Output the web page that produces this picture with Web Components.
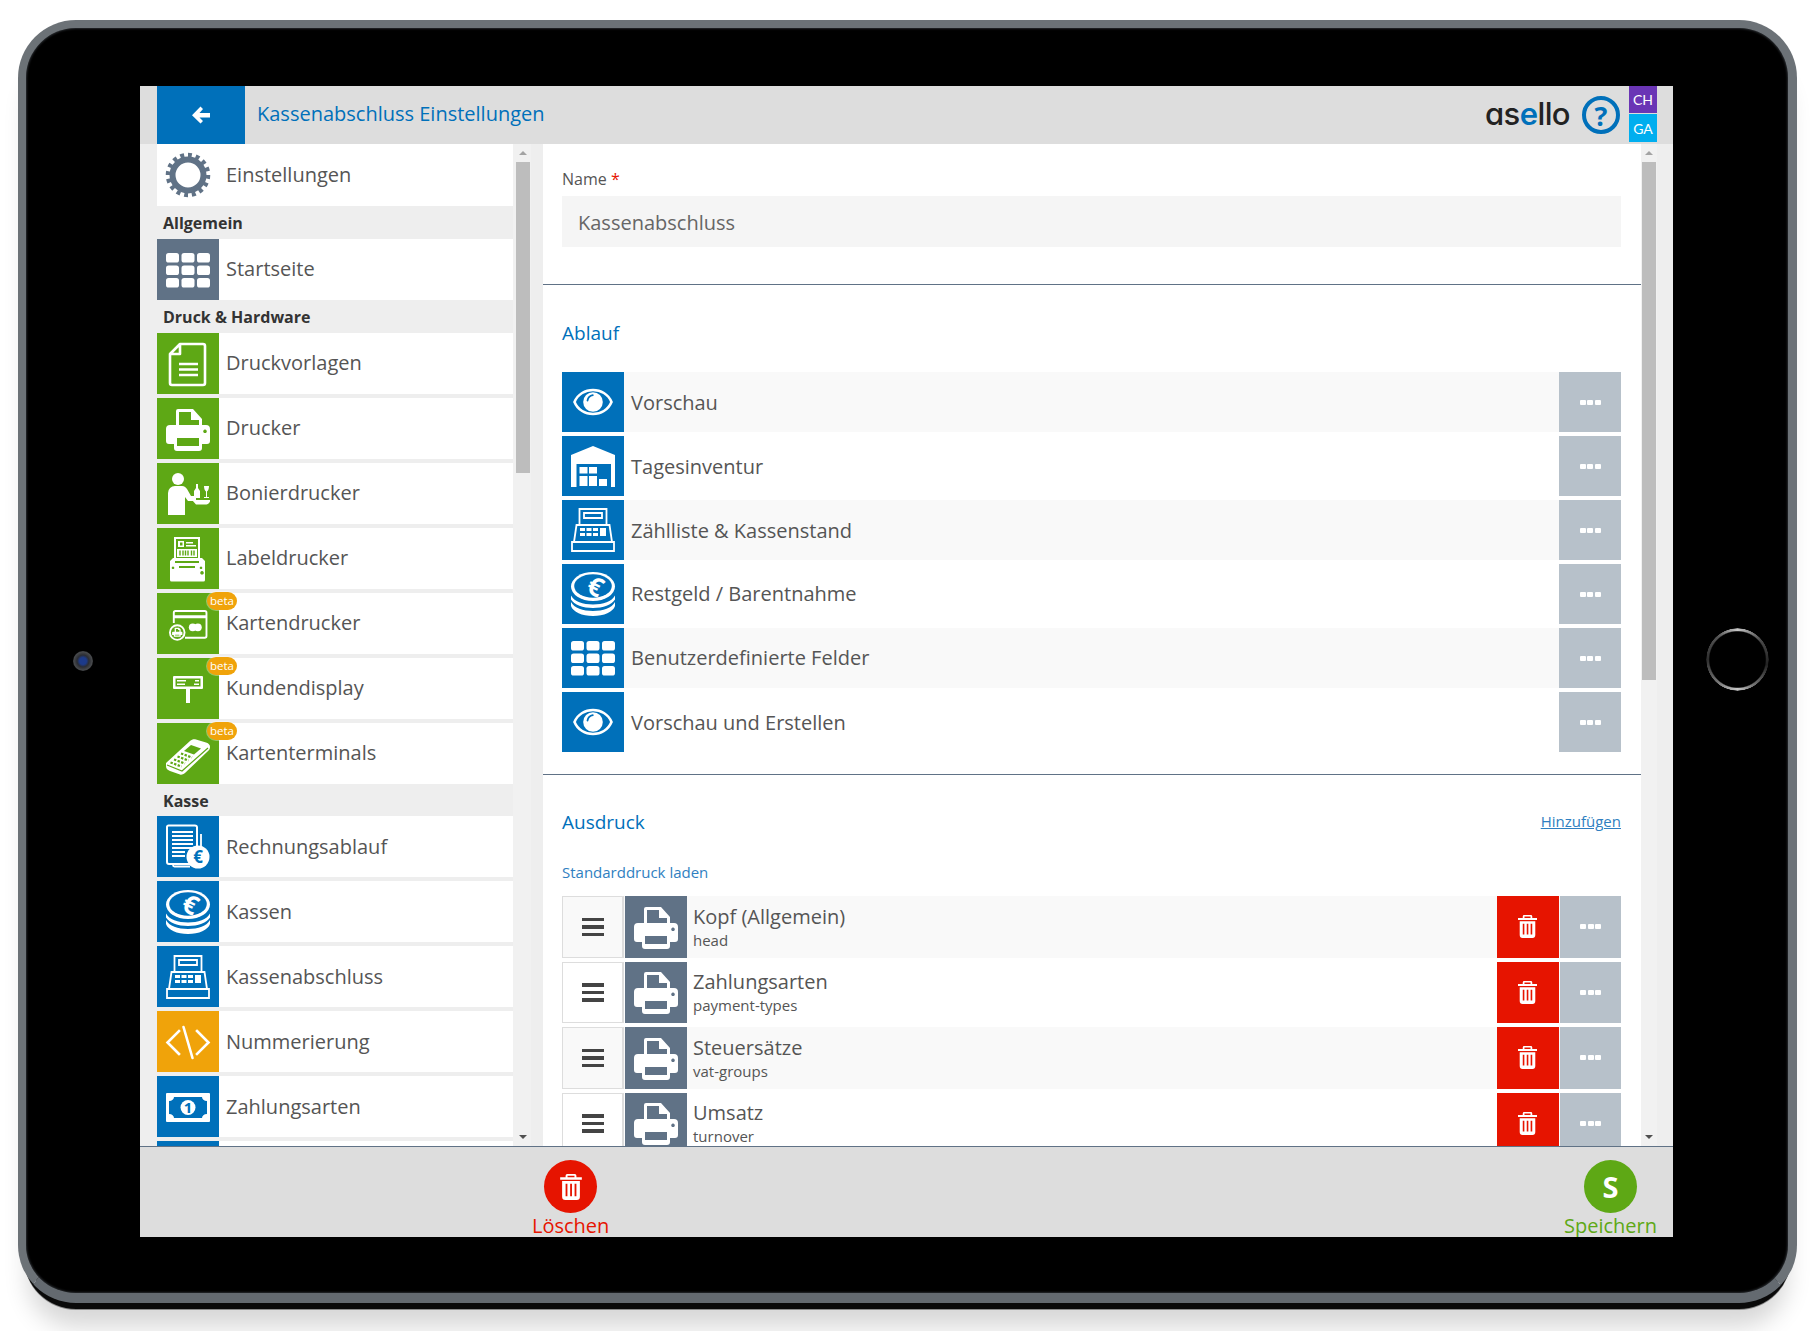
<!DOCTYPE html>
<html lang="de">
<head>
<meta charset="utf-8">
<title>Kassenabschluss Einstellungen</title>
<style>
  html, body { margin: 0; background: #fff; font-family: "Open Sans", "Liberation Sans", sans-serif; }
  body { height: 1331px; overflow: hidden; padding: 20px 18px 0; box-sizing: border-box; }
</style>
</head>
<body>
<script>
const printerPath = `<path fill="currentColor" fill-rule="evenodd" d="M10 4a2 2 0 0 1 2-2h15l9 10v6h4a4 4 0 0 1 4 4v12a3 3 0 0 1-3 3h-5v4a3 3 0 0 1-3 3H11a3 3 0 0 1-3-3v-4H3a3 3 0 0 1-3-3V22a4 4 0 0 1 4-4h6zM13 5v13h20v-5h-8V5zM11 31v8h22v-8zM39 22.500a1.800 1.800 0 1 0 .01 0z"/>`;
const eyePath = `<path fill="none" stroke="currentColor" stroke-width="2.600" d="M3.500 22C10 6 34 6 40.500 22 34 38 10 38 3.500 22z"/><circle cx="22" cy="22" r="9.800" fill="currentColor"/><path fill="none" stroke="var(--tile)" stroke-width="1.800" stroke-linecap="round" d="M16.500 20.500c.6-3 2.600-4.800 5.300-5.300"/>`;
const gridPath = [5, 17.500, 30].map(y => [0, 15.500, 31].map(x =>
  `<rect x="${x}" y="${y}" width="13" height="9.500" rx="2.600" fill="currentColor"/>`).join("")).join("");
const euro = (x, y, size, color, rot) => `<text x="${x}" y="${y}" font-family="Open Sans" font-weight="700" font-size="${size}" text-anchor="middle" fill="${color}" transform="rotate(${rot} ${x} ${y})">€</text>`;

const ICONS = {
  grid: gridPath,
  gear: `<circle cx="22" cy="22" r="15.500" fill="none" stroke="currentColor" stroke-width="6"/><circle cx="22" cy="22" r="20" fill="none" stroke="currentColor" stroke-width="4.500" pathLength="32" stroke-dasharray="1 1"/>`,
  doc: `<path fill="none" stroke="currentColor" stroke-width="2.600" stroke-linejoin="round" d="M14 2h23a2 2 0 0 1 2 2v37a2 2 0 0 1-2 2H6a2 2 0 0 1-2-2V12zM14 2v10H4"/><path stroke="currentColor" stroke-width="2.600" d="M13 22h19M13 27.500h19M13 33h19"/>`,
  printer: printerPath,
  waiter: `<circle cx="12" cy="7" r="6" fill="currentColor"/><path fill="currentColor" d="M2 43V21a7 7 0 0 1 7-7h7c2.500 0 4 1.500 5 3l4 7h5v5h-8l-3-4v18z"/><path fill="currentColor" d="M30 12h2v4l2 3v7h-6v-7l2-3zM38 14h5c0 3-1 5-2 5.500V25h2v1h-5v-1h2v-5.500c-1-.5-2-2.500-2-5.500zM26 28h18v1.500c-1 2.500-3 3-5 3H30z"/>`,
  label: `<path fill="currentColor" fill-rule="evenodd" d="M8 0h26v21h2l3 3v19a1.500 1.500 0 0 1-1.500 1.500h-32A1.500 1.500 0 0 1 4 43V24l3-3h1zM10 2v19h22V2zM9 24v2h24v-2zM7 29.500a1.300 1.300 0 1 0 .01 0zM35 29.500a1.300 1.300 0 1 0 .01 0zM36 34a1.800 1.800 0 1 0 .01 0zM13 29v2h16v-2z"/><path fill="currentColor" d="M12 4h6v6h-6zM20 5h7v1.500h-7zM20 8h10v1.500H20zM11 12h20v8H11z"/><path stroke="var(--tile)" stroke-width="1.400" d="M14 13.500v5M17 13.500v5M19.500 13.500v5M22 13.500v5M25.500 13.500v5M28 13.500v5"/><path fill="var(--tile)" d="M14 5.500h2.500v3H14z"/>`,
  card: `<g transform="translate(3.500 3) scale(.86)"><path fill="none" stroke="currentColor" stroke-width="2.200" d="M5 21V9a2 2 0 0 1 2-2h34a2 2 0 0 1 2 2v27a2 2 0 0 1-2 2H18"/><path fill="currentColor" d="M5 12h38v3.500H5z"/><circle cx="27" cy="26" r="4.500" fill="currentColor"/><circle cx="33" cy="26" r="4.500" fill="currentColor"/><circle cx="9" cy="32" r="8.500" fill="var(--tile)" stroke="currentColor" stroke-width="2.200"/><path fill="currentColor" fill-rule="evenodd" d="M6 26.500h5l2 2V31h1a1 1 0 0 1 1 1v3h-2v2H5v-2H3v-3a1 1 0 0 1 1-1h2zM7.500 28v3h4v-2H10v-1zM6.500 34.500v1h5v-1z"/></g>`,
  display: `<g transform="translate(6 -1)"><path fill="currentColor" fill-rule="evenodd" d="M1 11a1 1 0 0 1 1-1h28a1 1 0 0 1 1 1v11a1 1 0 0 1-1 1H18v14h-4V23H2a1 1 0 0 1-1-1zM3.500 12.500v8h25v-8z"/><path fill="currentColor" d="M5 14h9v1.600H5zM23 14h4v1.600h-4zM5 17.500h8v1.600H5zM22 17.500h5v1.600h-5z"/></g>`,
  terminal: `<path fill="currentColor" d="M0 31 24 9c2-1.800 4-2 6-1.500l10 3c3 1 4 2.500 4 4.500 0 2-1 3.500-3 5L19 41c-2 1.500-3.500 2-5 1.500L4 39c-3-1-4-3-4-5z"/><path fill="var(--tile)" d="m25 13 10 3.500-7 6-10-3.500z"/><path stroke="var(--tile)" stroke-width="2.200" stroke-dasharray="2.400 1.400" d="M15 21.500l11 4M11.500 24.500l11 4M8 27.500l11 4M4.500 30.500l11 4"/><path stroke="var(--tile)" stroke-width="1.200" fill="none" d="M1 33l15 6 26-23"/>`,
  receipt: `<path fill="none" stroke="currentColor" stroke-width="1.800" d="M7 38.500V40a1.500 1.500 0 0 0 1.500 1.500H24M35 9V24"/><path fill="none" stroke="currentColor" stroke-width="2" d="M26 39H3a2 2 0 0 1-2-2V2a1.500 1.500 0 0 1 1.500-1.500h26A2 2 0 0 1 31 2.500V22"/><path stroke="currentColor" stroke-width="1.800" d="M6 7h21M6 11h21M6 15h21M6 19h21M6 23h21M6 27h13M6 31h13"/><circle cx="32" cy="32" r="11.500" fill="currentColor"/>${euro(32, 38, 17, "var(--tile)", 0)}`,
  coins: `<path fill="currentColor" d="M0 30c3 6 12 9 22 9s19-3 22-9v4c-2 6-11 10-22 10S2 40 0 34z"/><path fill="currentColor" d="M0 23.500c3 6 12 9 22 9s19-3 22-9v4c-3 5-12 8.500-22 8.500S3 32.500 0 27.500z"/><ellipse cx="22" cy="14.500" rx="22" ry="14.500" fill="currentColor"/><ellipse cx="22" cy="14" rx="18.800" ry="11.800" fill="var(--tile)"/>${euro(20.500, 23, 26, "currentColor", 25)}`,
  register: `<path fill="none" stroke="currentColor" stroke-width="1.800" d="M8.500 1h27v16H8.500zM13 5h18v5H13zM1 34h42v9H1zM3 34l2.500-17h33L41 34"/><path fill="currentColor" d="M9 20h5v3H9zM15.500 20h5v3h-5zM22 20h5v3h-5zM9 25h5v3H9zM15.500 25h5v3h-5zM22 25h5v3h-5zM29 20h6v8h-6z"/>`,
  code: `<path fill="none" stroke="currentColor" stroke-width="2.600" stroke-linecap="square" d="M13 11 1.500 22.500 13 34M31 11l11.500 11.500L31 34"/><path fill="none" stroke="currentColor" stroke-width="2.600" stroke-linecap="round" d="M17.500 7l9 31"/>`,
  bill: `<path fill="currentColor" fill-rule="evenodd" d="M1 8h42a1 1 0 0 1 1 1v27a1 1 0 0 1-1 1H1a1 1 0 0 1-1-1V9a1 1 0 0 1 1-1zM8 12c0 2-2 4-5 4v13c3 0 5 2 5 4h28c0-2 2-4 5-4V16c-3 0-5-2-5-4z"/><circle cx="22" cy="22.500" r="7.500" fill="currentColor"/><text x="22" y="28" font-family="Open Sans" font-weight="700" font-size="15" text-anchor="middle" fill="var(--tile)">1</text>`,
  eye: eyePath,
  store: `<path fill="currentColor" fill-rule="evenodd" d="M0 11 22 2l22 9v32h-4V20H5.500v23H0z"/><path fill="currentColor" d="M8.500 23h8v6.500h-8zM18 23h8v6.500h-8zM8.500 32h8v10h-8zM18 32h8v10h-8zM28 35h8v7h-8z"/>`
};

const trashSvg = (w, h) => `<svg width="${w}" height="${h}" viewBox="0 0 20 24"><path fill="currentColor" fill-rule="evenodd" d="M6.500 0h7a1.500 1.500 0 0 1 1.500 1.500V3h5v2.200H0V3h5V1.500A1.500 1.500 0 0 1 6.500 0zM6.800 1.500V3h6.400V1.500zM1.800 6.500h16.400V21a3 3 0 0 1-3 3H4.800a3 3 0 0 1-3-3zM5 9v11.500h1.700V9zM9.200 9v11.500h1.700V9zM13.300 9v11.500H15V9z"/></svg>`;

const tones = { green: "#5ea815", blue: "#0070ba", slate: "#607286", orange: "#f0a30a" };

class IconTile extends HTMLElement {
  connectedCallback() {
    const tone = tones[this.getAttribute("tone")] || "transparent";
    this.attachShadow({ mode: "open" }).innerHTML = `
      <style>
        :host { display: flex; align-items: center; justify-content: center; flex: none; width: 62px; height: 100%;
          background: ${tone}; --tile: ${tone}; color: #fff; }
        :host([tone="none"]) { color: #607286; }
        svg { display: block; overflow: visible; }
      </style>
      <svg width="44" height="44" viewBox="0 0 44 44">${ICONS[this.getAttribute("name")]}</svg>`;
  }
}

class FakeScrollbar extends HTMLElement {
  connectedCallback() {
    this.attachShadow({ mode: "open" }).innerHTML = `
      <style>
        :host { display: flex; flex-direction: column; flex: none; width: 16px; height: 100%; background: #f1f1f1; padding: 0 1px; box-sizing: border-box; align-items: stretch; }
        .up, .down { height: 18px; flex: none; display: flex; align-items: center; justify-content: center; }
        .up i, .down i { width: 0; height: 0; border: 4px solid transparent; }
        .up i { border-bottom: 4px solid #a3a3a3; border-top: 0; }
        .down i { border-top: 4px solid #505050; border-bottom: 0; }
        .track { flex: 1; min-height: 0; }
        .thumb { height: ${this.getAttribute("thumb")}px; background: #bdbdbd; }
      </style>
      <div class="up"><i></i></div>
      <div class="track"><div class="thumb"></div></div>
      <div class="down"><i></i></div>`;
  }
}

class NavSection extends HTMLElement {
  connectedCallback() {
    this.attachShadow({ mode: "open" }).innerHTML = `
      <style>
        :host { display: flex; align-items: center; height: ${this.getAttribute("h") || 33}px; padding-left: 6px;
          font-size: 16px; font-weight: 700; color: #333; box-sizing: border-box; }
      </style><slot></slot>`;
  }
}

class NavRow extends HTMLElement {
  connectedCallback() {
    const beta = this.hasAttribute("beta") ? `<span class="beta">beta</span>` : "";
    this.attachShadow({ mode: "open" }).innerHTML = `
      <style>
        :host { display: flex; align-items: center; position: relative; height: 61px; margin-bottom: 4px; background: #fff;
          font-size: 20px; color: #555; }
        :host([last]) { margin-bottom: 0; }
        span.t { margin-left: 7px; padding-bottom: 1px; }
        :host([lift]) span.t { padding-bottom: 2.500px; }
        .beta { position: absolute; left: 50px; top: -1px; width: 30px; height: 18px; line-height: 17px; border-radius: 9px;
          background: #f0a30a; color: #fff; font-size: 11.500px; text-align: center; box-shadow: 0 0 0 1px rgba(255,255,255,.35); }
      </style>
      <icon-tile name="${this.getAttribute("icon")}" tone="${this.getAttribute("tone")}"></icon-tile>
      <span class="t"><slot></slot></span>${beta}`;
  }
}

class DotsButton extends HTMLElement {
  connectedCallback() {
    this.attachShadow({ mode: "open" }).innerHTML = `
      <style>
        :host { display: flex; align-items: center; justify-content: center; gap: 1.500px; flex: none; width: 62px; height: 100%; background: #b7c1ca; }
        i { width: 6px; height: 5px; border-radius: 1px; background: #fff; }
      </style><i></i><i></i><i></i>`;
  }
}

class StepRow extends HTMLElement {
  connectedCallback() {
    this.attachShadow({ mode: "open" }).innerHTML = `
      <style>
        :host { display: flex; align-items: center; height: 60px; margin-bottom: 4px; font-size: 20px; color: #555; }
        :host([alt]) { background: #f9f9f9; }
        .t { flex: 1; margin-left: 7px; }
        :host([lift]) .t { padding-bottom: 2px; }
      </style>
      <icon-tile name="${this.getAttribute("icon")}" tone="blue"></icon-tile>
      <span class="t"><slot></slot></span>
      <dots-button></dots-button>`;
  }
}

class PrintRow extends HTMLElement {
  connectedCallback() {
    this.attachShadow({ mode: "open" }).innerHTML = `
      <style>
        :host { display: flex; align-items: center; height: 61.500px; margin-bottom: 4px; color: #555; flex: none; }
        :host([alt]) { background: #f9f9f9; }
        .grip { box-sizing: border-box; width: 62px; height: 100%; flex: none; border: 1.500px solid #ddd; border-right-width: 2px; margin-right: 1px;
          display: flex; flex-direction: column; align-items: center; justify-content: center; gap: 4px; }
        .grip i { width: 22px; height: 3.500px; background: #444; }
        .t { flex: 1; margin-left: 6px; padding-top: 1px; font-size: 20px; line-height: 24px; }
        .t small { display: block; margin-top: 1px; font-size: 15px; line-height: 20px; }
        .del { width: 62px; height: 100%; flex: none; background: #e61400; color: #fff; margin-right: 1px;
          display: flex; align-items: center; justify-content: center; }
        .del svg { margin-right: 2px; }
        dots-button { width: 61px; }
        svg { display: block; }
      </style>
      <div class="grip"><i></i><i></i><i></i></div>
      <icon-tile name="printer" tone="slate"></icon-tile>
      <div class="t"><slot></slot><small>${this.getAttribute("sub")}</small></div>
      <div class="del">${trashSvg(19, 23)}</div>
      <dots-button></dots-button>`;
  }
}

class AppHeader extends HTMLElement {
  connectedCallback() {
    this.attachShadow({ mode: "open" }).innerHTML = `
      <style>
        :host { display: flex; align-items: center; flex: none; height: 58px; padding-left: 17px; padding-right: 16px; background: #ddd; }
        .back { width: 88px; height: 100%; background: #0070ba; display: flex; align-items: center; justify-content: center; flex: none; }
        h1 { margin: 0 0 0 12px; padding-bottom: 4px; flex: 1; font-size: 20px; font-weight: 400; color: #0070ba; }
        .logo { font-family: Inter, Lato, sans-serif; font-feature-settings: "cv11" 1; font-size: 31px; font-weight: 500; letter-spacing: -.6px; color: #222; line-height: 40px; padding-bottom: 2px; }
        .logo b { font-weight: 600; color: #0070ba; }
        .help { box-sizing: border-box; width: 38px; height: 38px; border: 4px solid #0070ba; border-radius: 50%; margin: 0 9px 0 12px;
          display: flex; align-items: center; justify-content: center; color: #0070ba; font-size: 27px; font-weight: 700; line-height: 1; }
        .tags { display: flex; flex-direction: column; gap: 1px; align-self: flex-start; }
        .tags span { display: flex; align-items: center; justify-content: center; width: 28px; height: 27px; color: #fff; font-size: 14px; font-family: Lato, sans-serif; }
        .ch { background: #6a35b5; } .ga { background: #00aeef; height: 28px !important; }
      </style>
      <div class="back"><svg width="18" height="18" viewBox="0 0 18 18"><path fill="#fff" d="M8.500.5 11 3 7.500 7H18v4.500H7.500L11 15l-2.500 2.500L0 9.200z"/></svg></div>
      <h1><slot></slot></h1>
      <div class="logo">as<b>e</b>llo</div>
      <div class="help">?</div>
      <div class="tags"><span class="ch">CH</span><span class="ga">GA</span></div>`;
  }
}

class RoundAction extends HTMLElement {
  connectedCallback() {
    const green = this.getAttribute("tone") === "green";
    const c = green ? "#5ea815" : "#e61400";
    this.attachShadow({ mode: "open" }).innerHTML = `
      <style>
        :host { display: flex; flex-direction: column; align-items: center; color: ${c}; font-size: 20px; line-height: 22px; }
        .dot { flex: none; width: 53px; height: 53px; border-radius: 50%; background: ${c}; color: #fff; display: flex; align-items: center; justify-content: center;
          font-size: 29px; line-height: 1; font-weight: 700; margin-bottom: 2px; }
        svg { display: block; }
      </style>
      <div class="dot">${green ? "S" : trashSvg(22, 26)}</div>
      <slot></slot>`;
  }
}

class SideNav extends HTMLElement {
  connectedCallback() {
    this.attachShadow({ mode: "open" }).innerHTML = `
      <style>
        :host { display: flex; flex: none; width: 386px; height: 100%; background: #eee; }
        .list { width: 356px; flex: none; height: 100%; overflow: hidden; }
        fake-scrollbar { width: 18px; padding: 0 1px 0 3px; }
      </style>
      <div class="list"><slot></slot></div>
      <fake-scrollbar thumb="311"></fake-scrollbar>`;
  }
}

class MainPanel extends HTMLElement {
  connectedCallback() {
    this.attachShadow({ mode: "open" }).innerHTML = `
      <style>
        :host { display: flex; flex: 1; min-width: 0; height: 100%; background: #eee; }
        .scroll { width: 1098px; flex: none; height: 100%; overflow: hidden; background: #fff; }
        hr { border: 0; height: 1px; background: #607286; margin: 0; }
        .pad { padding: 0 20px 0 19px; }
        label { display: block; height: 20px; line-height: 20px; padding-top: 25px; font-size: 16px; color: #555; box-sizing: content-box; }
        label em { color: #e61400; font-style: normal; }
        .input { height: 51px; margin-top: 7px; margin-bottom: 37px; background: #f5f5f5; line-height: 53px; padding-left: 16px; font-size: 20px; color: #666; }
        h2 { margin: 0; font-size: 19px; font-weight: 400; line-height: 26px; color: #0070ba; }
        .head { display: flex; justify-content: space-between; align-items: center; }
        .head a { margin-top: -2px; }
        a { color: #2f7fc1; font-size: 15px; line-height: 20px; }
        .load { display: block; text-decoration: none; margin: 27px 0 14px; }
      </style>
      <div class="scroll">
        <div class="pad">
          <label>Name <em>*</em></label>
          <div class="input">Kassenabschluss</div>
        </div>
        <hr>
        <div class="pad" style="padding-top:35px;padding-bottom:18px">
          <h2 style="margin-bottom:26px">Ablauf</h2>
          <slot name="steps"></slot>
        </div>
        <hr>
        <div class="pad" style="padding-top:34px">
          <div class="head"><h2>Ausdruck</h2><a href="#">Hinzufügen</a></div>
          <a class="load" href="#">Standarddruck laden</a>
          <slot name="prints"></slot>
        </div>
      </div>
      <fake-scrollbar thumb="518"></fake-scrollbar>`;
  }
}

class AppFooter extends HTMLElement {
  connectedCallback() {
    this.attachShadow({ mode: "open" }).innerHTML = `
      <style>
        :host { display: flex; flex: none; box-sizing: border-box; height: 91px; background: #ddd; border-top: 1px solid #607286; padding-top: 13px; padding-right: 16px; }
        .spacer { flex: none; width: 392px; }
        .fill { flex: 1; }
      </style>
      <div class="spacer"></div><slot name="left"></slot><div class="fill"></div><slot name="right"></slot>`;
  }
}

class TabletFrame extends HTMLElement {
  connectedCallback() {
    this.attachShadow({ mode: "open" }).innerHTML = `
      <style>
        :host { display: flex; box-sizing: border-box; width: 1779px; height: 1283px; background: #000; padding: 0 1px 0 0;
          border: 8px solid #6c7277; border-right-width: 9px; border-bottom-width: 10px; border-bottom-color: #646a70; border-radius: 58px;
          box-shadow: inset 0 0 2px 1px #26292d, 0 12px 0 -6px #0a0a0a, 0 13px 0 -6px #8a8a8a, 0 34px 24px -10px rgba(0,0,0,.16); }
        .bezel { flex: none; display: flex; align-items: center; justify-content: center; }
        .left { width: 114px; }
        .left i { display: block; width: 20px; height: 20px; border-radius: 50%; background: radial-gradient(circle at 50% 50%, #1c3a8a 0 24%, #2b2d33 42%, #47494c 64%, #0a0a0a 100%); }
        .right { width: 114px; }
        .right i { display: block; margin: -3px 0 0 14px; width: 63px; height: 63px; border-radius: 50%;
          background: conic-gradient(#c8c8c8 0deg, #4a4a4a 50deg, #222 100deg, #777 150deg, #c8c8c8 180deg, #777 220deg, #2e2e2e 270deg, #555 320deg, #c8c8c8 360deg);
          -webkit-mask: radial-gradient(closest-side, transparent 88%, #000 92%, #000 98%, transparent 100%);
          mask: radial-gradient(closest-side, transparent 88%, #000 92%, #000 98%, transparent 100%); }
        .screen { flex: none; width: 1533px; height: 1151px; margin-top: 58px; display: flex; flex-direction: column; background: #eee; overflow: hidden; }
        .body { flex: 1; min-height: 0; display: flex; padding-left: 17px; }
      </style>
      <div class="bezel left"><i></i></div>
      <div class="screen">
        <slot name="header"></slot>
        <div class="body"><slot name="nav"></slot><slot name="main"></slot></div>
        <slot name="footer"></slot>
      </div>
      <div class="bezel right"><i></i></div>`;
  }
}

customElements.define("icon-tile", IconTile);
customElements.define("fake-scrollbar", FakeScrollbar);
customElements.define("nav-section", NavSection);
customElements.define("nav-row", NavRow);
customElements.define("dots-button", DotsButton);
customElements.define("step-row", StepRow);
customElements.define("print-row", PrintRow);
customElements.define("app-header", AppHeader);
customElements.define("round-action", RoundAction);
customElements.define("side-nav", SideNav);
customElements.define("main-panel", MainPanel);
customElements.define("app-footer", AppFooter);
customElements.define("tablet-frame", TabletFrame);

document.body.insertAdjacentHTML("beforeend", `
<tablet-frame>
  <app-header slot="header">Kassenabschluss Einstellungen</app-header>
  <side-nav slot="nav">
    <nav-row icon="gear" tone="none" last style="height:62px">Einstellungen</nav-row>
    <nav-section>Allgemein</nav-section>
    <nav-row icon="grid" tone="slate" last lift>Startseite</nav-row>
    <nav-section>Druck &amp; Hardware</nav-section>
    <nav-row icon="doc" tone="green" lift>Druckvorlagen</nav-row>
    <nav-row icon="printer" tone="green" lift>Drucker</nav-row>
    <nav-row icon="waiter" tone="green" lift>Bonierdrucker</nav-row>
    <nav-row icon="label" tone="green" lift>Labeldrucker</nav-row>
    <nav-row icon="card" tone="green" beta lift>Kartendrucker</nav-row>
    <nav-row icon="display" tone="green" beta lift>Kundendisplay</nav-row>
    <nav-row icon="terminal" tone="green" beta last lift>Kartenterminals</nav-row>
    <nav-section h="32" style="padding-top:2px">Kasse</nav-section>
    <nav-row icon="receipt" tone="blue">Rechnungsablauf</nav-row>
    <nav-row icon="coins" tone="blue">Kassen</nav-row>
    <nav-row icon="register" tone="blue">Kassenabschluss</nav-row>
    <nav-row icon="code" tone="orange">Nummerierung</nav-row>
    <nav-row icon="bill" tone="blue">Zahlungsarten</nav-row>
    <nav-row icon="grid" tone="blue"></nav-row>
  </side-nav>
  <main-panel slot="main">
    <step-row slot="steps" icon="eye" alt>Vorschau</step-row>
    <step-row slot="steps" icon="store">Tagesinventur</step-row>
    <step-row slot="steps" icon="register" alt>Zählliste &amp; Kassenstand</step-row>
    <step-row slot="steps" icon="coins" lift>Restgeld / Barentnahme</step-row>
    <step-row slot="steps" icon="grid" alt lift>Benutzerdefinierte Felder</step-row>
    <step-row slot="steps" icon="eye">Vorschau und Erstellen</step-row>
    <print-row slot="prints" sub="head" alt>Kopf (Allgemein)</print-row>
    <print-row slot="prints" sub="payment-types">Zahlungsarten</print-row>
    <print-row slot="prints" sub="vat-groups" alt>Steuersätze</print-row>
    <print-row slot="prints" sub="turnover">Umsatz</print-row>
  </main-panel>
  <app-footer slot="footer">
    <round-action slot="left">Löschen</round-action>
    <round-action slot="right" tone="green">Speichern</round-action>
  </app-footer>
</tablet-frame>`);
</script>
</body>
</html>
